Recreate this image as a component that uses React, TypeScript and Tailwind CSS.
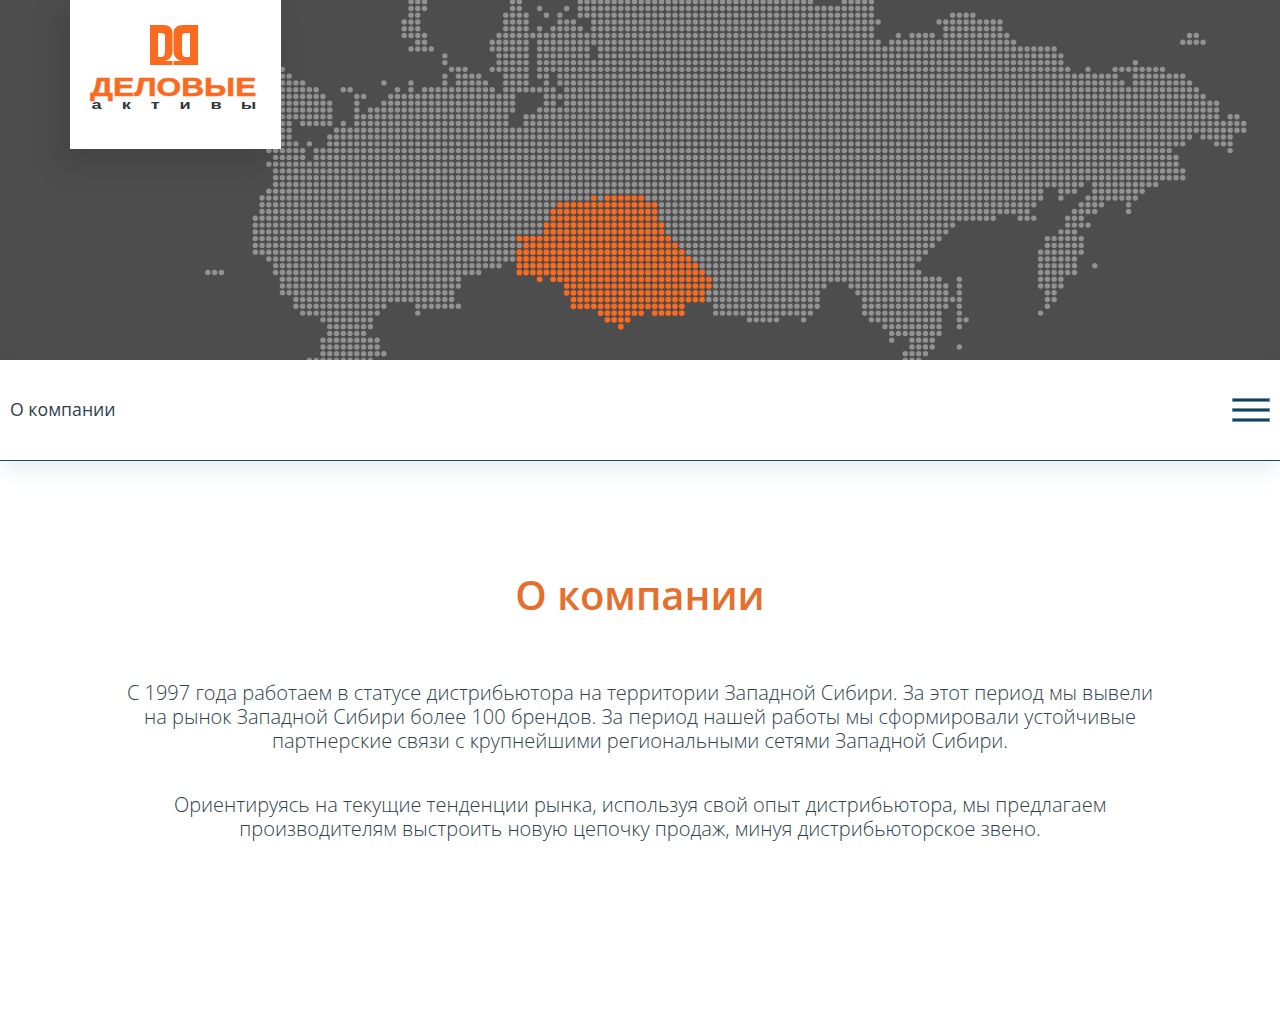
const GRAY: number[][][] = [
  [[60,62],[75,76],[85,119],[124,128]],
  [[60,62],[75,76],[79,79],[83,83],[85,128]],
  [[60,61],[74,77],[80,80],[82,82],[85,128],[140,143]],
  [[59,61],[74,77],[82,84],[87,129],[138,147]],
  [[59,61],[74,77],[79,79],[81,85],[87,128],[139,147]],
  [[59,62],[73,77],[78,86],[87,128],[132,132],[134,137],[139,148],[175,176]],
  [[61,62],[72,77],[79,86],[87,129],[131,149],[174,177]],
  [[60,63],[72,77],[79,86],[88,155]],
  [[65,65],[73,77],[79,86],[88,156]],
  [[65,65],[73,77],[79,156],[167,167]],
  [[41,41],[66,68],[72,77],[79,157],[160,160],[164,171]],
  [[41,42],[65,65],[67,70],[74,77],[79,80],[82,164],[167,174]],
  [[41,44],[56,56],[60,60],[65,65],[67,71],[74,77],[80,80],[82,165],[167,175]],
  [[41,46],[50,51],[58,58],[60,60],[62,72],[74,81],[83,176]],
  [[41,47],[52,53],[57,75],[80,82],[83,177]],
  [[41,48],[52,52],[56,75],[80,81],[83,179]],
  [[41,48],[52,52],[54,75],[79,179]],
  [[41,48],[52,74],[77,179],[181,182]],
  [[41,42],[44,48],[50,50],[52,74],[77,183]],
  [[41,42],[49,183]],
  [[41,42],[48,175],[177,181]],
  [[41,43],[45,45],[48,174],[179,181]],
  [[39,44],[46,172],[181,181]],
  [[40,44],[46,173]],
  [[39,173]],
  [[40,174]],
  [[40,174]],
  [[40,159],[161,170]],
  [[39,153],[156,158],[161,168]],
  [[38,153],[156,156],[160,167]],
  [[38,152],[159,162],[166,166]],
  [[38,151],[158,161],[166,166]],
  [[37,146],[150,152],[157,159]],
  [[37,140],[157,160]],
  [[37,139],[156,158]],
  [[37,138],[154,159]],
  [[37,137],[154,159]],
  [[37,136],[153,159]],
  [[39,135],[153,158]],
  [[40,73],[76,134],[153,158],[161,161]],
  [[30,32],[40,70],[76,135],[153,158]],
  [[41,67],[105,138],[141,141],[153,156]],
  [[41,67],[105,121],[125,139],[141,141],[153,156]],
  [[41,66],[104,120],[126,139],[141,141],[154,155]],
  [[43,66],[104,120],[127,141],[154,155]],
  [[43,56],[61,67],[105,120],[127,139],[141,141],[154,154]],
  [[44,55],[61,61],[105,119],[127,138],[141,141],[153,153]],
  [[47,54],[110,114],[118,118],[128,138],[141,142]],
  [[48,54],[130,138],[141,141]],
  [[48,53],[131,138]],
  [[47,55],[131,131],[134,137]],
  [[47,55],[134,137],[141,141]],
  [[47,56],[133,136]],
  [[45,54],[133,135]],
];

// first row of the region is 29
const ORANGE: number[][][] = [
  [[87,87],[89,94]],
  [[82,96]],
  [[81,96]],
  [[81,96]],
  [[80,97]],
  [[80,97]],
  [[76,98]],
  [[77,99]],
  [[76,100]],
  [[76,101]],
  [[76,102]],
  [[76,103]],
  [[79,79],[81,104]],
  [[83,104]],
  [[83,103]],
  [[84,103]],
  [[84,100]],
  [[88,94],[96,100]],
  [[89,92]],
  [[91,91]],
];

const PITCH = 6.77;
const colX = (c: number) => 4.8 + c * PITCH;
const rowY = (r: number) => 1.67 + r * PITCH;

function expand(rows: number[][][], firstRow: number) {
  const dots: { x: number; y: number }[] = [];
  rows.forEach((ranges, i) => {
    ranges.forEach(([from, to]) => {
      for (let c = from; c <= to; c++) {
        dots.push({ x: colX(c), y: rowY(i + firstRow) });
      }
    });
  });
  return dots;
}

function DotMap() {
  const orange = expand(ORANGE, 29);
  const taken = new Set(orange.map((d) => `${d.x}:${d.y}`));
  const gray = expand(GRAY, 0).filter((d) => !taken.has(`${d.x}:${d.y}`));
  return (
    <svg viewBox="0 0 1280 360" className="block h-[360px] w-full">
      {gray.map((d) => (
        <circle key={`${d.x}:${d.y}`} cx={d.x} cy={d.y} r={2.7} fill="#929292" />
      ))}
      {orange.map((d) => (
        <circle key={`${d.x}:${d.y}`} cx={d.x} cy={d.y} r={2.85} fill="#fb6a1e" />
      ))}
    </svg>
  );
}

function Logo() {
  return (
    <div className="absolute left-[70px] top-0 flex h-[149px] w-[211px] flex-col items-center bg-white pr-[4px] pt-[25px] shadow-[-10px_14px_30px_rgba(0,0,0,0.14)]">
      <svg viewBox="0 0 48 40" className="h-[40px] w-[48px]">
        <path
          fill="#fb6a1e"
          fillRule="evenodd"
          d="M0 0H14C19 0 22.5 3 22.5 8V26C22.5 31 19.5 35 14.5 36H22.5V40H0ZM8 8V32H11.5C13.5 32 15 30 15 27V11C15 9 13.5 8 11.5 8Z"
        />
        <path
          fill="#fb6a1e"
          fillRule="evenodd"
          d="M48 0H33C27 0 23.5 3 23.5 8V26C23.5 31 26.5 35 31.5 36H23.5V40H48ZM40 8V32H35.5C33.5 32 32 30 32 27V11C32 9 33.5 8 35.5 8Z"
        />
      </svg>
      <div className="mt-[12px] h-[20px] text-[25px] font-bold leading-[20px] text-[#fb6a1e] [-webkit-text-stroke:0.5px_#fb6a1e] [font-family:'Liberation_Sans',sans-serif] [transform:scaleX(1.27)]">
        ДЕЛОВЫЕ
      </div>
      <div className="mt-[3px] flex w-[162px] justify-between text-[13px] font-bold leading-[10px] text-[#33383c] [font-family:'Liberation_Sans',sans-serif]">
        {["а", "к", "т", "и", "в", "ы"].map((l) => (
          <span key={l} className="[transform:scaleX(1.4)]">
            {l}
          </span>
        ))}
      </div>
    </div>
  );
}

export default function App() {
  return (
    <div className="min-h-[1015px] bg-white text-[#2f3f4b] [font-family:'Open_Sans',sans-serif]">
      <header className="relative h-[360px] overflow-hidden bg-[#4d4d4d]">
        <DotMap />
        <Logo />
      </header>

      <nav className="relative flex h-[101px] items-center justify-between border-b border-[#1f4a58] bg-white pb-px pl-[10px] pr-[10px] shadow-[0_12px_18px_-4px_rgba(150,185,200,0.25)]">
        <span className="text-[17.7px] text-[#2f3f4c]">О компании</span>
        <button className="flex w-[38px] flex-col gap-[6px]">
          <span className="h-1 w-full border border-[#6a97b5] bg-[#1f3f50]" />
          <span className="h-1 w-full border border-[#6a97b5] bg-[#1f3f50]" />
          <span className="h-1 w-full border border-[#6a97b5] bg-[#1f3f50]" />
        </button>
      </nav>

      <main className="px-[60px] pt-[107px] text-center">
        <h1 className="text-[40px] font-semibold leading-[54px] text-[#e56f2c]">О компании</h1>
        <p className="mt-[59px] text-[20px] font-light leading-6">
          С 1997 года работаем в статусе дистрибьютора на территории Западной Сибири. За этот период мы вывели
          <br />
          на рынок Западной Сибири более 100 брендов. За период нашей работы мы сформировали устойчивые
          <br />
          партнерские связи с крупнейшими региональными сетями Западной Сибири.
        </p>
        <p className="mt-10 text-[20px] font-light leading-6">
          Ориентируясь на текущие тенденции рынка, используя свой опыт дистрибьютора, мы предлагаем
          <br />
          производителям выстроить новую цепочку продаж, минуя дистрибьюторское звено.
        </p>
      </main>
    </div>
  );
}
